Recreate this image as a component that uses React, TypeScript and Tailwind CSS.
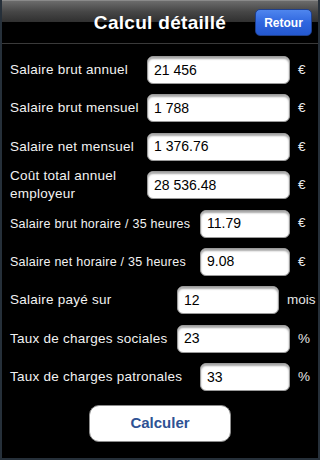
import React from "react";

type Row = {
  label: React.ReactNode;
  value: string;
  unit: string;
  labelW: string;
  inputW: string;
  small?: boolean;
};

const rows: Row[] = [
  { label: "Salaire brut annuel", value: "21 456", unit: "€", labelW: "w-[145px]", inputW: "w-[143px]" },
  { label: "Salaire brut mensuel", value: "1 788", unit: "€", labelW: "w-[145px]", inputW: "w-[143px]" },
  { label: "Salaire net mensuel", value: "1 376.76", unit: "€", labelW: "w-[145px]", inputW: "w-[143px]" },
  {
    label: (
      <>
        Coût total annuel
        <br />
        employeur
      </>
    ),
    value: "28 536.48",
    unit: "€",
    labelW: "w-[145px]",
    inputW: "w-[143px]",
  },
  { label: "Salaire brut horaire / 35 heures", value: "11.79", unit: "€", labelW: "w-[198px]", inputW: "w-[90px]", small: true },
  { label: "Salaire net horaire / 35 heures", value: "9.08", unit: "€", labelW: "w-[198px]", inputW: "w-[90px]", small: true },
  { label: "Salaire payé sur", value: "12", unit: "mois", labelW: "w-[175px]", inputW: "w-[102px]" },
  { label: "Taux de charges sociales", value: "23", unit: "%", labelW: "w-[175px]", inputW: "w-[113px]" },
  { label: "Taux de charges patronales", value: "33", unit: "%", labelW: "w-[198px]", inputW: "w-[90px]" },
];

export default function App() {
  return (
    <div className="w-[320px] h-[460px] bg-black border-x-2 border-b-2 border-[#26303a] flex flex-col font-['Liberation_Sans',Arial,sans-serif] overflow-hidden">
      {/* Header */}
      <div className="relative h-[44px] flex items-center justify-center border-b border-[#3a3a3a]">
        <div className="absolute inset-x-0 top-0 h-[22px] bg-gradient-to-b from-[#6c6c6c] via-[#474747] to-[#303030] border-t border-[#8a8a8a]" />
        <h1 className="relative mt-[3px] text-white text-[19px] font-bold tracking-[0.3px]">Calcul détaillé</h1>
        <button className="absolute right-[6px] top-[9px] w-[57px] h-[27px] rounded-[5px] bg-gradient-to-b from-[#4f86ee] via-[#2f66df] to-[#2458cf] border border-[#1f3f8c] text-white text-[12px] font-bold">
          Retour
        </button>
      </div>

      {/* Rows */}
      <div className="flex flex-col gap-[10.375px] pt-[12px]">
        {rows.map((r, i) => (
          <div key={i} className="flex items-center h-[28px]">
            <div
              className={`${r.labelW} pl-[8px] text-[#f2f2f2] leading-[18px] tracking-[0.25px] ${r.small ? "text-[12.5px]" : "text-[13.5px]"}`}
            >
              {r.label}
            </div>
            <div
              className={`${r.inputW} h-[28px] bg-white rounded-[6px] border border-[#9a9a9a] shadow-[inset_0_2px_2px_rgba(0,0,0,0.35)] flex items-center pl-[6px] text-[14px] text-black`}
            >
              {r.value}
            </div>
            <div className="ml-[8px] text-[#e6e6e6] text-[13.5px]">{r.unit}</div>
          </div>
        ))}
      </div>

      {/* Action */}
      <div className="flex justify-center pt-[14px]">
        <button className="w-[142px] h-[37px] bg-white rounded-[10px] border border-[#8c8c8c] text-[#2e5294] text-[15px] font-bold">
          Calculer
        </button>
      </div>
    </div>
  );
}
